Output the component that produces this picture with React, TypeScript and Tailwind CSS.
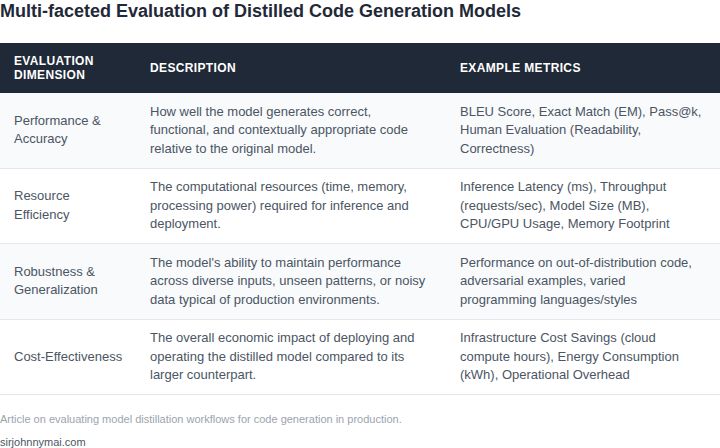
const rows = [
  {
    dim: "Performance & Accuracy",
    desc: "How well the model generates correct, functional, and contextually appropriate code relative to the original model.",
    metrics: "BLEU Score, Exact Match (EM), Pass@k, Human Evaluation (Readability, Correctness)",
  },
  {
    dim: "Resource Efficiency",
    desc: "The computational resources (time, memory, processing power) required for inference and deployment.",
    metrics: "Inference Latency (ms), Throughput (requests/sec), Model Size (MB), CPU/GPU Usage, Memory Footprint",
  },
  {
    dim: "Robustness & Generalization",
    desc: "The model's ability to maintain performance across diverse inputs, unseen patterns, or noisy data typical of production environments.",
    metrics: "Performance on out-of-distribution code, adversarial examples, varied programming languages/styles",
  },
  {
    dim: "Cost-Effectiveness",
    desc: "The overall economic impact of deploying and operating the distilled model compared to its larger counterpart.",
    metrics: "Infrastructure Cost Savings (cloud compute hours), Energy Consumption (kWh), Operational Overhead",
  },
];

export default function App() {
  return (
    <div className="w-[720px] h-[448px] overflow-hidden bg-white font-['Liberation_Sans',Arial,sans-serif]">
      <h1 className="text-[18px] leading-[22px] font-bold text-[#1f2937]">
        Multi-faceted Evaluation of Distilled Code Generation Models
      </h1>
      <table className="mt-[21px] w-full border-collapse table-fixed">
        <thead>
          <tr className="bg-[#1f2937] text-white text-left text-[12px] leading-[14px] font-bold uppercase tracking-[0.03em]">
            <th className="w-[136px] pl-[14px] pr-[8px] py-[11px] font-bold">Evaluation Dimension</th>
            <th className="w-[310px] px-[14px] py-[11px] font-bold">Description</th>
            <th className="pl-[14px] pr-[18px] py-[11px] font-bold">Example Metrics</th>
          </tr>
        </thead>
        <tbody>
          {rows.map((r, i) => (
            <tr
              key={r.dim}
              className={`border-b border-[#e5e7eb] text-[13px] leading-[18.5px] text-[#4b5563] ${
                i % 2 === 0 ? "bg-[#f8fafc]" : "bg-white"
              }`}
            >
              <td className="pl-[14px] pr-[8px] py-[9.5px] align-middle">{r.dim}</td>
              <td className="px-[14px] py-[9.5px] align-middle">{r.desc}</td>
              <td className="pl-[14px] pr-[18px] py-[9.5px] align-middle">{r.metrics}</td>
            </tr>
          ))}
        </tbody>
      </table>
      <p className="mt-[17px] text-[11px] leading-[14px] text-[#9ca3af]">
        Article on evaluating model distillation workflows for code generation in production.
      </p>
      <p className="mt-[9px] text-[11px] leading-[14px] text-[#4b5563]">sirjohnnymai.com</p>
    </div>
  );
}
